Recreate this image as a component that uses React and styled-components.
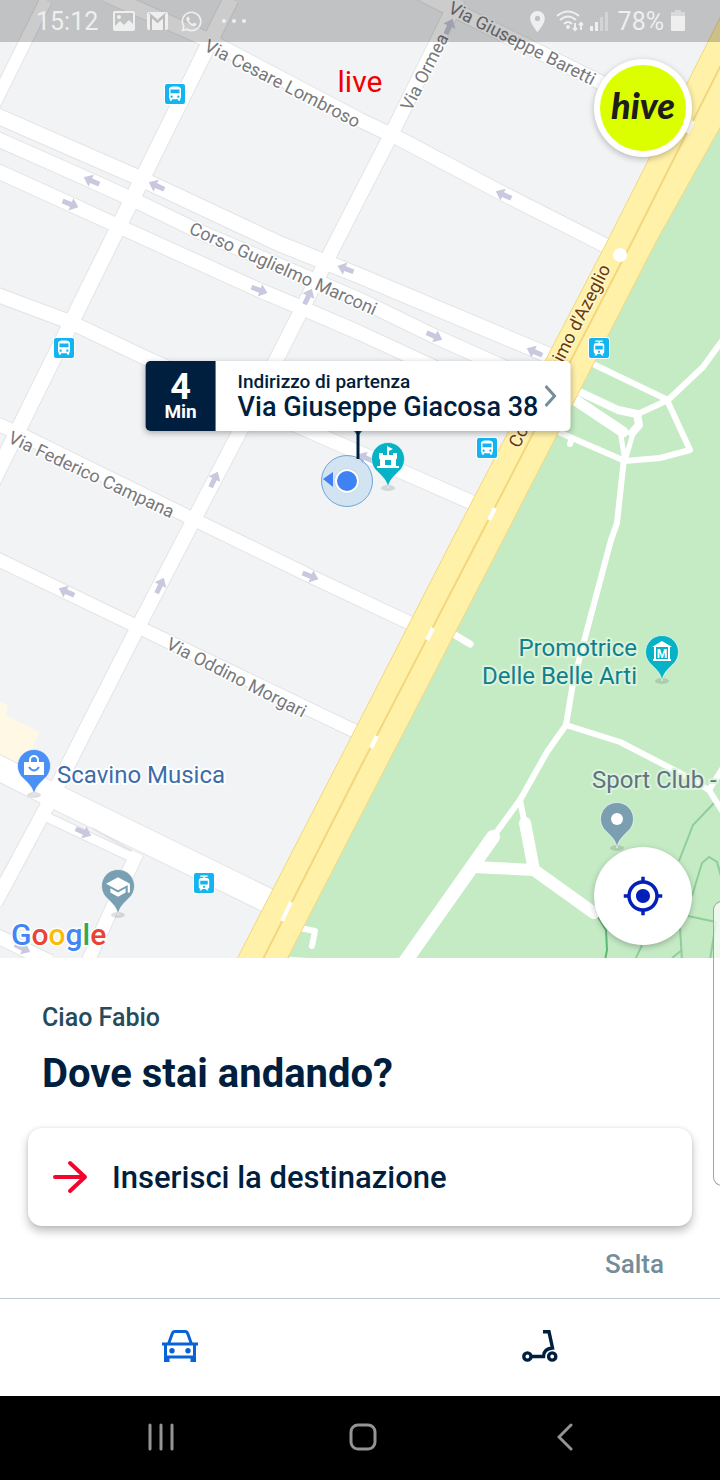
import React from 'react';
import styled, { createGlobalStyle } from 'styled-components';
import { FaWhatsapp } from 'react-icons/fa';
import {
	MdDirectionsBus,
	MdLocationOn,
	MdMyLocation,
	MdSchool,
	MdTram,
} from 'react-icons/md';

const GlobalStyle = createGlobalStyle`
	* {
		box-sizing: border-box;
	}
	body {
		margin: 0;
		background: #fff;
		font-family: Roboto, "Liberation Sans", sans-serif;
	}
	button {
		border: 0;
		padding: 0;
		background: none;
		font-family: inherit;
		cursor: pointer;
	}
`

const Screen = styled.div`
	position: relative;
	display: flex;
	flex-direction: column;
	min-height: 100vh;
`

/* map */

const MapArea = styled.section`
	position: relative;
	flex: 1;
	min-height: 560px;
	overflow: hidden;
	background: #f1f3f4;
`
const MapCanvas = styled.svg`
	position: absolute;
	top: 0;
	left: 0;
	width: 100%;
	height: 100%;
`
const StreetName = styled.text`
	font-size: 18px;
	fill: ${props => props.$color || "#77797c"};
	stroke: ${props => props.$halo || "#fff"};
	stroke-width: 3px;
	stroke-linejoin: round;
	paint-order: stroke;
`
const PlaceName = styled.text`
	font-size: 24px;
	fill: ${props => props.$color};
	stroke: ${props => props.$halo || "#fff"};
	stroke-width: 4px;
	stroke-linejoin: round;
	paint-order: stroke;
`
const GoogleMark = styled.text`
	font-size: 30px;
	font-weight: 500;
	stroke: #fff;
	stroke-width: 3px;
	paint-order: stroke;
`

/* status bar */

const StatusBar = styled.header`
	position: absolute;
	top: 0;
	left: 0;
	right: 0;
	display: flex;
	align-items: center;
	justify-content: space-between;
	height: 42px;
	padding: 0 34px 0 36px;
	background: rgba(0, 0, 0, 0.2);
	color: #efefef;
	font-size: 25px;
`
const StatusGroup = styled.div`
	display: flex;
	align-items: center;
	gap: ${props => props.$gap}px;
`
const Clock = styled.span`
	margin-right: 3px;
`

const LiveLabel = styled.div`
	position: absolute;
	top: 64px;
	left: 0;
	right: 0;
	text-align: center;
	font-size: 30px;
	line-height: 36px;
	color: #f20000;
	pointer-events: none;
`
const RoundButton = styled.button`
	position: absolute;
	right: 28px;
	display: flex;
	align-items: center;
	justify-content: center;
	width: 98px;
	height: 98px;
	border-radius: 50%;
	background: #fff;
	box-shadow: 0 2px 6px rgba(0, 0, 0, 0.25);
`
const HiveButton = styled(RoundButton)`
	top: 59px;
`
const LocateButton = styled(RoundButton)`
	bottom: 13px;
	color: #0420b8;
`
const HiveLogo = styled.span`
	display: flex;
	align-items: center;
	justify-content: center;
	width: 86px;
	height: 86px;
	padding-bottom: 6px;
	border-radius: 50%;
	background: #dcff00;
	color: #1d1d1b;
	font-family: Lato, sans-serif;
	font-size: 36px;
	font-weight: 900;
	font-style: italic;
`

const Callout = styled.button`
	position: absolute;
	top: 361px;
	left: 50%;
	transform: translateX(-50%);
	display: flex;
	align-items: stretch;
	height: 70px;
	margin-left: -2px;
	border-radius: 5px;
	background: #fff;
	box-shadow: 0 2px 6px rgba(0, 0, 0, 0.3);
	color: #001e3e;
	text-align: left;
	white-space: nowrap;
`
const Eta = styled.span`
	display: flex;
	flex-direction: column;
	align-items: center;
	justify-content: center;
	width: 70px;
	border-radius: 5px 0 0 5px;
	background: #001e3e;
	color: #fff;
	font-weight: 700;
`
const EtaValue = styled.span`
	padding-top: 2px;
	font-size: 36px;
	line-height: 30px;
`
const EtaUnit = styled.span`
	font-size: 19px;
	line-height: 20px;
`
const Pickup = styled.span`
	display: flex;
	flex-direction: column;
	justify-content: center;
	padding: 0 6px 0 22px;
	font-weight: 500;
`
const PickupLabel = styled.span`
	font-size: 19px;
	line-height: 22px;
`
const PickupAddress = styled.span`
	font-size: 27px;
	line-height: 28px;
`
const CalloutChevron = styled.svg`
	align-self: center;
	margin-right: 14px;
`

/* sheet */

const Sheet = styled.main`
	display: flex;
	flex-direction: column;
	padding: 44px 28px 18px;
	background: #fff;
`
const Greeting = styled.p`
	margin: 0 14px;
	font-size: 25px;
	line-height: 32px;
	font-weight: 500;
	color: #264b5b;
`
const Title = styled.h1`
	margin: 16px 14px 30px;
	font-size: 40px;
	line-height: 48px;
	font-weight: 700;
	color: #001e3e;
`
const DestinationButton = styled.button`
	display: flex;
	align-items: center;
	gap: 24px;
	height: 98px;
	padding: 0 24px;
	border-radius: 14px;
	background: #fff;
	box-shadow: 0 5px 10px rgba(0, 0, 0, 0.26), 0 0 3px rgba(0, 0, 0, 0.1);
	font-size: 31px;
	font-weight: 500;
	color: #001e3e;
`
const SkipButton = styled.button`
	align-self: flex-end;
	margin: 22px 28px 0 0;
	font-size: 26px;
	line-height: 32px;
	font-weight: 500;
	color: #748d97;
`
const Tabs = styled.nav`
	display: flex;
	height: 98px;
	border-top: 1px solid #bccbd3;
	background: #fff;
`
const Tab = styled.button`
	flex: 1;
	display: flex;
	align-items: center;
	justify-content: center;
	padding-bottom: 4px;
	color: ${props => props.$active ? "#0763d6" : "#001e3e"};
`
const SystemNav = styled.footer`
	display: grid;
	grid-template-columns: repeat(3, 1fr);
	height: 84px;
	padding: 0 54px 2px 60px;
	background: #000;
`
const SystemButton = styled.button`
	display: flex;
	align-items: center;
	justify-content: center;
	color: #949494;
`
const Clip = styled.div`
	position: absolute;
	inset: 0;
	overflow: hidden;
	pointer-events: none;
`
const EdgeHandle = styled.div`
	position: absolute;
	right: -2px;
	bottom: 294px;
	width: 9px;
	height: 285px;
	border: 1px solid #a0a4a4;
	border-radius: 9px 0 0 9px;
	background: rgba(255, 255, 255, 0.7);
`

// [points, width]
const streets = [
	["46,0 -8,109", 12],
	["231,-1 -10,487", 15],
	["458,-1 392,133 337,240 240,431 138,627 45,810 -5,903", 14],
	["137,853 84,970", 13],
	["105,-6 208,40 360,120 400,139 500,192 622,254", 14],
	["418,-8 450,8 610,87", 14],
	["-5,115 137,177 280,244 360,276 560,360", 15],
	["-5,138 92,181 134,200 200,232 360,300 434,336 510,370", 14],
	["-5,170 70,204 118,226 259,290 302,308 360,333 440,370", 14],
	["-5,294 70,322 150,360 330,440 480,506", 14],
	["-5,423 18,433 195,520 310,576 412,624", 13],
	["-5,558 138,627 365,736", 13],
	["-5,766 50,794 275,904", 24],
	["40,814 140,861", 9],
	["-5,935 50,962", 14],
]

const parkPaths = [
	["595,365 668,400 703,367 724,338", 6],
	["667,400 690,450 660,458 625,461", 6],
	["668,400 640,413", 6],
	["556,431 625,461", 6],
	["572,438 570,444", 6],
	["575,400 623,432", 11],
	["582,393 618,410 637,414 639,425 632,433", 8],
	["620,430 625,461 634,430", 5],
	["624,458 617,523 611,540 587,630 573,683 566,725", 6],
	["566,725 620,742 680,773 709,790 724,814", 6],
	["709,790 724,766", 6],
	["566,725 547,752 520,800 493,837", 6],
	["493,837 402,966", 14],
	["520,800 525,825", 6],
	["525,823 534,870", 12],
	["473,867 534,870 594,913", 12],
	["455,635 470,644", 7],
	["300,928 315,931 312,946", 6],
	["291,959 308,960", 4],
]

const trails = [
	["715,802 693,825 679,861", "#8fce9b"],
	["692,896 702,863 709,857 717,862 722,880", "#8fce9b"],
	["688,916 716,922", "#8fce9b"],
	["680,928 682,960", "#8fce9b"],
	["642,945 635,960", "#8fce9b"],
	["672,958 682,950", "#8fce9b"],
	["716,922 710,960", "#8fce9b"],
	["598,917 606,930 607,950 605,960", "#5bb974"],
]

// [x, y, direction in degrees]
const arrows = [
	[92, 181, 204], [70, 204, 22], [157, 186, 204], [504, 195, 204],
	[259, 290, 20], [308, 297, -65], [346, 269, 200], [434, 336, 24],
	[535, 352, 204], [366, 458, 204], [214, 480, -65], [160, 586, -65],
	[310, 576, 22], [67, 592, 204], [83, 832, 24], [22, 948, 26],
	[449, 27, -66],
]

const PinShape = ({ x, y, color, children }) => (
	<g transform={`translate(${x} ${y})`}>
		<ellipse cx="0" cy="29" rx="7" ry="3" fill="#000" opacity="0.12" />
		<path
			d="M0 29 C-1 22 -5 18 -11 12.3 A16.5 16.5 0 1 1 11 12.3 C5 18 1 22 0 29Z"
			fill={color}
			stroke="#fff"
			strokeOpacity="0.6"
			strokeWidth="1"
		/>
		{children}
	</g>
)

const Stop = ({ x, y, tram }) => {
	const Icon = tram ? MdTram : MdDirectionsBus;
	return (
		<g transform={`translate(${x} ${y})`}>
			<rect x="-11" y="-11" width="22" height="22" rx="3" fill="#fff" />
			<rect x="-10" y="-10" width="20" height="20" rx="2" fill="#12b5f0" />
			<Icon x="-9" y="-9" size="18" color="#fff" />
		</g>
	)
}

const TurinMap = () => (
	<MapCanvas viewBox="0 0 720 958" preserveAspectRatio="xMidYMid slice" role="img" aria-label="Mappa">
		<rect width="720" height="958" fill="#f1f3f4" />
		<path d="M-1 702 L8 705 L6 715 L39 732 L26 765 L-1 758Z" fill="#fff8e5" />
		<g fill="none" stroke="#e3e4e7">
			{streets.map(([points, width]) => <polyline key={points} points={points} strokeWidth={width + 2} />)}
		</g>
		<g fill="none" stroke="#fff" strokeLinejoin="round">
			{streets.map(([points, width]) => <polyline key={points} points={points} strokeWidth={width} />)}
		</g>
		<path d="M92 828 L132 851" stroke="#e3e4e7" strokeWidth="2" />
		<path d="M720 120 L657 240 L503 540 L360 817 L287 959 H721 V120Z" fill="#c5ebc5" />
		<g fill="none" strokeWidth="2">
			{trails.map(([points, color]) => <polyline key={points} points={points} stroke={color} />)}
		</g>
		<g fill="none" stroke="#fff" strokeLinecap="round" strokeLinejoin="round">
			{parkPaths.map(([points, width]) => <polyline key={points} points={points} strokeWidth={width} />)}
		</g>
		<path
			d="M730 -2 L720 18 L608 240 L452 540 L360 720 L237 959 H287 L360 817 L503 540 L657 240 L722 124 V-2Z"
			fill="#fff1a8"
			stroke="#f3d77f"
		/>
		<path d="M722 63 L633 240 L478 540 L360 768 L263 959" fill="none" stroke="#f3d77f" strokeWidth="2" />
		<g stroke="#fff" strokeWidth="4">
			<path d="M693 121 L687 133" />
			<path d="M495 508 L489 520" />
			<path d="M433 628 L427 640" />
			<path d="M377 736 L371 748" />
			<path d="M291 902 L282 921" />
		</g>
		<circle cx="620" cy="255" r="7" fill="#fff" />
		{arrows.map(([x, y, angle]) => (
			<path
				key={`${x}-${y}`}
				d="M-8 -2.5 H1 V-6.5 L9 0 L1 6.5 V2.5 H-8Z"
				fill="#c9c8de"
				transform={`translate(${x} ${y}) rotate(${angle})`}
			/>
		))}
		<StreetName transform="translate(203 50) rotate(27)">Via Cesare Lombroso</StreetName>
		<StreetName transform="translate(447 12) rotate(27)">Via Giuseppe Baretti</StreetName>
		<StreetName transform="translate(411 112) rotate(-63)">Via Ormea</StreetName>
		<StreetName transform="translate(188 233) rotate(24)">Corso Guglielmo Marconi</StreetName>
		<StreetName transform="translate(7 442) rotate(25)">Via Federico Campana</StreetName>
		<StreetName transform="translate(165 648) rotate(27)">Via Oddino Morgari</StreetName>
		<StreetName transform="translate(519 449) rotate(-63)" $color="#6a3c06" $halo="#fff6cc">
			Corso Massimo d'Azeglio
		</StreetName>
		<Stop x={175} y={94} />
		<Stop x={64} y={348} />
		<Stop x={487} y={448} />
		<Stop x={599} y={348} tram />
		<Stop x={204} y={883} tram />

		<PlaceName x="57" y="783" $color="#3d6cab">Scavino Musica</PlaceName>
		<PlaceName x="637" y="656" textAnchor="end" $color="#11808c" $halo="#dcf3dc">Promotrice</PlaceName>
		<PlaceName x="637" y="684" textAnchor="end" $color="#11808c" $halo="#dcf3dc">Delle Belle Arti</PlaceName>
		<PlaceName x="592" y="788" $color="#5f7480" $halo="#dcf3dc">Sport Club -</PlaceName>

		<PinShape x={34} y={766} color="#4a90f5">
			<path d="M-10 -4 H10 V9 H-10Z" fill="#fff" />
			<path d="M-4 -4 V-6 A4 4 0 0 1 4 -6 V-4" fill="none" stroke="#fff" strokeWidth="2" />
			<path d="M-5 1 Q0 8 5 1" fill="none" stroke="#4a90f5" strokeWidth="2" />
		</PinShape>
		<PinShape x={118} y={886} color="#78a0b2">
			<MdSchool x="-13" y="-12" size="26" color="#fff" />
		</PinShape>
		<PinShape x={617} y={819} color="#7b9fb0">
			<circle r="6" fill="#fff" />
		</PinShape>
		<PinShape x={662} y={652} color="#06b2c6">
			<path d="M-10 -5 L0 -11 L10 -5Z M-9 7 H9 V9 H-9Z" fill="#fff" />
			<path d="M-7 -5 V8 M7 -5 V8" stroke="#fff" strokeWidth="2" />
			<text x="0" y="6" textAnchor="middle" fontSize="12" fontWeight="700" fill="#fff">M</text>
		</PinShape>
		<PinShape x={388} y={459} color="#06b2c6">
			<path
				d="M-9 -6 H-5 V-4 H-1 V-13 L5 -10 L1 -8 V-4 H5 V-6 H9 V0 H8 V7 H11 V9 H-11 V7 H-8 V0 H-9Z"
				fill="#fff"
			/>
			<path d="M-3 6 V1 H3 V6Z" fill="#06b2c6" />
		</PinShape>

		<circle cx="347" cy="481" r="25.5" fill="#4a9bea" fillOpacity="0.18" stroke="#6fa6d6" />
		<path d="M323 479 L333 472 V487Z" fill="#3f7ff0" />
		<circle cx="347" cy="481" r="12.5" fill="#000" opacity="0.1" />
		<circle cx="347" cy="481" r="12" fill="#fff" />
		<circle cx="347" cy="481" r="10" fill="#3f82f4" />
		<path d="M353 430 H363 L358 436Z" fill="#08707c" />
		<path d="M358 428 V459" stroke="#001e3e" strokeWidth="3" />

		<GoogleMark x="11" y="945">
			<tspan fill="#4285f4">G</tspan>
			<tspan fill="#ea4335">o</tspan>
			<tspan fill="#fbbc05">o</tspan>
			<tspan fill="#4285f4">g</tspan>
			<tspan fill="#34a853">l</tspan>
			<tspan fill="#ea4335">e</tspan>
		</GoogleMark>
	</MapCanvas>
)

const Status = () => (
	<StatusBar>
		<StatusGroup $gap={12}>
			<Clock>15:12</Clock>
			<svg width="22" height="20" viewBox="0 0 22 20" fill="currentColor">
				<path d="M2 0 H20 Q22 0 22 2 V18 Q22 20 20 20 H2 Q0 20 0 18 V2 Q0 0 2 0Z M2 2 V15 L7 10 L11 14 L16 9 L20 13 V2Z" fillRule="evenodd" />
				<circle cx="6" cy="6" r="2" />
			</svg>
			<svg width="21" height="18" viewBox="0 0 21 18">
				<rect width="21" height="18" rx="2" fill="#efefef" />
				<path d="M4 18 V4 L10.5 10 L17 4 V18" fill="none" stroke="#bbb" strokeWidth="2" />
				<path d="M2 1 L10.5 8 L19 1" fill="none" stroke="#bbb" strokeWidth="1" />
			</svg>
			<FaWhatsapp size={23} />
			<svg width="38" height="6" viewBox="0 0 38 6" fill="currentColor">
				<circle cx="9" cy="3" r="2" />
				<circle cx="19" cy="3" r="2" />
				<circle cx="29" cy="3" r="2" />
			</svg>
		</StatusGroup>
		<StatusGroup $gap={6}>
			<MdLocationOn size={25} />
			<svg width="28" height="22" viewBox="0 0 28 22" fill="none" stroke="currentColor" strokeWidth="2">
				<path d="M1 6 Q12 -3 23 6" />
				<path d="M4 10 Q12 3 20 10" />
				<path d="M8 14 Q12 10 16 14" />
				<circle cx="12" cy="17" r="1" fill="currentColor" />
				<path d="M19 13 V20 M17 18 L19 20 L21 18 M25 20 V13 M23 15 L25 13 L27 15" />
			</svg>
			<svg width="22" height="20" viewBox="0 0 22 20" fill="currentColor">
				<rect x="0" y="15" width="3" height="5" />
				<rect x="5" y="11" width="3" height="9" />
				<rect x="10" y="6" width="3" height="14" opacity="0.4" />
				<rect x="15" y="1" width="3" height="19" opacity="0.4" />
			</svg>
			<span>78%</span>
			<svg width="16" height="22" viewBox="0 0 16 22" fill="currentColor">
				<path d="M5 0 H11 V2 H15 V6 H1 V2 H5Z" opacity="0.5" />
				<path d="M1 6 H15 V20 Q15 21 14 21 H2 Q1 21 1 20Z" />
			</svg>
		</StatusGroup>
	</StatusBar>
)

const CarIcon = () => (
	<svg width="36" height="32" viewBox="0 0 36 32" fill="currentColor">
		<path d="M6.5 14 L10.3 3.6 Q11 1.5 13 1.5 H23 Q25 1.5 25.7 3.6 L29.5 14" fill="none" stroke="currentColor" strokeWidth="3" />
		<rect x="0" y="12.5" width="36" height="3" />
		<path d="M3.5 14 V29 M32.5 14 V29 M3 27 H33" fill="none" stroke="currentColor" strokeWidth="3" />
		<rect x="2" y="27" width="5.5" height="5" />
		<rect x="28.5" y="27" width="5.5" height="5" />
		<circle cx="10" cy="20.7" r="2.7" />
		<circle cx="26" cy="20.7" r="2.7" />
	</svg>
)

const ScooterIcon = () => (
	<svg width="36" height="32" viewBox="0 0 36 32" fill="none" stroke="currentColor" strokeWidth="3.4">
		<circle cx="5.4" cy="26.5" r="3.6" />
		<circle cx="30.2" cy="26.5" r="3.6" />
		<path d="M9 26.5 H21.5 C21.5 21.5 25 18.5 30.5 18 L27 1.8 H21" />
	</svg>
)

const App = () => (
	<>
		<GlobalStyle />
		<Screen>
			<MapArea>
				<TurinMap />
				<Status />
				<LiveLabel>live</LiveLabel>
				<HiveButton type="button">
					<HiveLogo>hive</HiveLogo>
				</HiveButton>
				<Callout type="button">
					<Eta>
						<EtaValue>4</EtaValue>
						<EtaUnit>Min</EtaUnit>
					</Eta>
					<Pickup>
						<PickupLabel>Indirizzo di partenza</PickupLabel>
						<PickupAddress>Via Giuseppe Giacosa 38</PickupAddress>
					</Pickup>
					<CalloutChevron width="12" height="22" viewBox="0 0 12 22" fill="none" stroke="#748d9c" strokeWidth="3">
						<path d="M1 1 L10 11 L1 21" />
					</CalloutChevron>
				</Callout>
				<LocateButton type="button" aria-label="La mia posizione">
					<MdMyLocation size={42} />
				</LocateButton>
			</MapArea>
			<Sheet>
				<Greeting>Ciao Fabio</Greeting>
				<Title>Dove stai andando?</Title>
				<DestinationButton type="button">
					<svg width="36" height="34" viewBox="0 0 36 34" fill="none" stroke="#f5052d" strokeWidth="4" strokeLinecap="round" strokeLinejoin="round">
						<path d="M3 17 H33 M18 3 L33 17 L18 31" />
					</svg>
					Inserisci la destinazione
				</DestinationButton>
				<SkipButton type="button">Salta</SkipButton>
			</Sheet>
			<Tabs>
				<Tab type="button" aria-label="Auto" $active>
					<CarIcon />
				</Tab>
				<Tab type="button" aria-label="Monopattino">
					<ScooterIcon />
				</Tab>
			</Tabs>
			<SystemNav>
				<SystemButton type="button" aria-label="Recenti">
					<svg width="26" height="28" viewBox="0 0 26 28" stroke="currentColor" strokeWidth="3" strokeLinecap="round">
						<path d="M2 2 V26 M13 2 V26 M24 2 V26" />
					</svg>
				</SystemButton>
				<SystemButton type="button" aria-label="Home">
					<svg width="28" height="28" viewBox="0 0 28 28" fill="none" stroke="currentColor" strokeWidth="3">
						<rect x="2" y="2" width="24" height="24" rx="7" />
					</svg>
				</SystemButton>
				<SystemButton type="button" aria-label="Indietro">
					<svg width="16" height="28" viewBox="0 0 16 28" fill="none" stroke="currentColor" strokeWidth="3" strokeLinecap="round">
						<path d="M14 2 L2 14 L14 26" />
					</svg>
				</SystemButton>
			</SystemNav>
			<Clip>
				<EdgeHandle />
			</Clip>
		</Screen>
	</>
)

export default App;
